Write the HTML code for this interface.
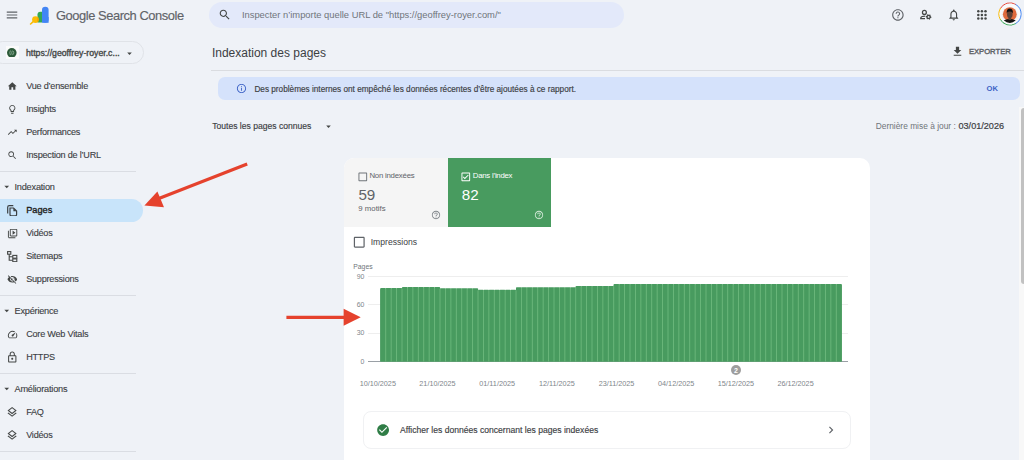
<!DOCTYPE html>
<html><head><meta charset="utf-8"><style>
html,body{margin:0;padding:0;}
body{width:1024px;height:460px;overflow:hidden;position:relative;background:#eff2f7;font-family:"Liberation Sans",sans-serif;}
.t{position:absolute;white-space:nowrap;line-height:1;}
.i{position:absolute;display:block;}
.b{position:absolute;}
</style></head><body>
<svg class="i" style="left:5.00px;top:7.60px;width:14px;height:14px" viewBox="0 0 24 24"><path fill="#5f6368" d="M3 18h18v-2H3v2zm0-5h18v-2H3v2zm0-7v2h18V6H3z"/></svg>
<svg class="i" style="left:28px;top:5px;width:24px;height:20px" viewBox="0 0 24 20">
<rect x="14" y="1.8" width="6.6" height="16" rx="3.3" fill="#4285f4"/>
<rect x="14" y="12" width="6.6" height="5.8" fill="#4285f4"/>
<path d="M9.5 9.6 Q9.5 6.7 12.3 6.7 L14 6.7 L14 17.6 L9.5 17.6 Z" fill="#34a853"/>
<circle cx="7.5" cy="14.6" r="3.4" fill="#fbbc04"/>
<path d="M9.5 12 A3.4 3.4 0 0 1 9.5 17.2 Z" fill="#ea8600" opacity=".7"/>
<path d="M5.2 16.6 L2.6 19" stroke="#fbbc04" stroke-width="1.6" stroke-linecap="round"/>
</svg>
<div class="t" style="left:55.90px;top:9.78px;font-size:12.9px;color:#5f6368;font-weight:normal;letter-spacing:-0.43px;-webkit-text-stroke:0.15px #5f6368">Google Search Console</div>
<div class="b" style="left:209px;top:2px;width:415px;height:25.5px;border-radius:13px;background:#e3e9fa"></div>
<svg class="i" style="left:217.85px;top:7.75px;width:13.5px;height:13.5px" viewBox="0 0 24 24"><path fill="#444746" d="M15.5 14h-.79l-.28-.27C15.41 12.59 16 11.11 16 9.5 16 5.91 13.09 3 9.5 3S3 5.91 3 9.5 5.91 16 9.5 16c1.61 0 3.09-.59 4.230-1.57l.27.28v.79l5 4.99L20.49 19l-4.99-5zm-6 0C7.01 14 5 11.99 5 9.5S7.01 5 9.5 5 14 7.01 14 9.5 11.99 14 9.5 14z"/></svg>
<div class="t" style="left:241.90px;top:11.07px;font-size:9.37px;color:#70757a;font-weight:normal;">Inspecter n’importe quelle URL de "https://geoffrey-royer.com/"</div>
<svg class="i" style="left:891.10px;top:7.60px;width:13.8px;height:13.8px" viewBox="0 0 24 24"><path fill="#5f6368" d="M11 18h2v-2h-2v2zm1-16C6.48 2 2 6.48 2 12s4.48 10 10 10 10-4.48 10-10S17.52 2 12 2zm0 18c-4.410 0-8-3.59-8-8s3.59-8 8-8 8 3.59 8 8-3.59 8-8 8zm0-14c-2.21 0-4 1.79-4 4h2c0-1.1.9-2 2-2s2 .9 2 2c0 2-3 1.75-3 5h2c0-2.25 3-2.5 3-5 0-2.21-1.79-4-4-4z"/></svg>
<svg class="i" style="left:919px;top:9px;width:13px;height:12px" viewBox="0 0 13 12">
<circle cx="5.4" cy="3.4" r="1.95" fill="none" stroke="#444746" stroke-width="1.25"/>
<path d="M6.2 7.05 Q1.9 7.1 1.8 9.0 V9.7 H6.0" fill="none" stroke="#444746" stroke-width="1.3"/>
<path d="M12.45,7.90 L12.35,8.64 L11.51,9.00 L11.16,9.46 L11.03,10.37 L10.34,10.65 L9.60,10.10 L9.03,10.03 L8.18,10.37 L7.58,9.92 L7.69,9.00 L7.47,8.47 L6.75,7.90 L6.85,7.16 L7.69,6.80 L8.04,6.34 L8.17,5.43 L8.86,5.15 L9.60,5.70 L10.17,5.77 L11.03,5.43 L11.62,5.88 L11.51,6.80 L11.73,7.33 Z" fill="#444746"/>
<circle cx="9.6" cy="7.9" r="0.9" fill="#eff2f7"/>
</svg>
<svg class="i" style="left:946.75px;top:8.25px;width:13.5px;height:13.5px" viewBox="0 0 24 24"><path fill="#444746" d="M12 22c1.1 0 2-.9 2-2h-4c0 1.1.89 2 2 2zm6-6v-5c0-3.07-1.64-5.64-4.5-6.32V4c0-.83-.67-1.5-1.5-1.5s-1.5.67-1.5 1.5v.68C7.63 5.36 6 7.92 6 11v5l-2 2v1h16v-1l-2-2zm-2 1H8v-6c0-2.48 1.51-4.5 4-4.5s4 2.02 4 4.5v6z"/></svg>
<svg class="i" style="left:976.6px;top:9.6px;width:10px;height:10px" viewBox="0 0 10 10"><circle cx="1.3" cy="1.3" r="1.25" fill="#444746"/><circle cx="4.9" cy="1.3" r="1.25" fill="#444746"/><circle cx="8.5" cy="1.3" r="1.25" fill="#444746"/><circle cx="1.3" cy="4.9" r="1.25" fill="#444746"/><circle cx="4.9" cy="4.9" r="1.25" fill="#444746"/><circle cx="8.5" cy="4.9" r="1.25" fill="#444746"/><circle cx="1.3" cy="8.5" r="1.25" fill="#444746"/><circle cx="4.9" cy="8.5" r="1.25" fill="#444746"/><circle cx="8.5" cy="8.5" r="1.25" fill="#444746"/></svg>
<svg class="i" style="left:997.5px;top:2.4px;width:24px;height:24px" viewBox="0 0 24 24">
<path d="M2.39 6.45 A11.1 11.1 0 0 1 17.88 2.59" fill="none" stroke="#ea4335" stroke-width="1.0"/><path d="M17.55 2.39 A11.1 11.1 0 0 1 17.21 21.80" fill="none" stroke="#4285f4" stroke-width="1.0"/><path d="M17.55 21.61 A11.1 11.1 0 0 1 2.20 17.21" fill="none" stroke="#34a853" stroke-width="1.0"/><path d="M2.39 17.55 A11.1 11.1 0 0 1 2.59 6.12" fill="none" stroke="#fbbc04" stroke-width="1.0"/>
<circle cx="12" cy="12" r="10.4" fill="#fafafa"/>
<clipPath id="av"><circle cx="11.8" cy="12.8" r="8.1"/></clipPath>
<g clip-path="url(#av)">
<rect x="0" y="0" width="24" height="24" fill="#f3f3f3"/>
<circle cx="11.8" cy="12.2" r="6.9" fill="#df6a3c"/>
<path d="M3 24 Q3.5 17.4 11.8 16.8 Q20 17.4 20.6 24 Z" fill="#161616"/>
<ellipse cx="11.8" cy="12.4" rx="2.8" ry="3.7" fill="#5e4236"/>
<path d="M8.7 11.5 Q8.3 6.6 11.8 6.6 Q15.3 6.6 14.9 11.5 Q14.2 9.2 11.8 9.4 Q9.4 9.2 8.7 11.5 Z" fill="#121212"/>
<path d="M10.4 16 H13.2 V18 H10.4Z" fill="#5e4236"/>
</g>
</svg>
<div class="b" style="left:-9px;top:41.3px;width:152.5px;height:22.8px;border:1px solid #e0e3e8;border-radius:12px;box-sizing:border-box"></div>
<div class="b" style="left:6px;top:46.3px;width:12.5px;height:12.7px;background:#fbfbfb"></div>
<svg class="i" style="left:7.4px;top:47.9px;width:9.6px;height:9.6px" viewBox="0 0 10 10"><circle cx="5" cy="5" r="5" fill="#2c5a39"/><path d="M3.6 2.6 Q2.2 5 3.6 7.4 M5.6 2.6 Q4.2 5 5.6 7.4 M6.6 3.2 Q7.6 5 6.6 6.8" fill="none" stroke="#a9c7b0" stroke-width="0.7"/></svg>
<div class="t" style="left:25.90px;top:49.41px;font-size:8.73px;color:#444746;font-weight:normal;-webkit-text-stroke:0.35px #444746">https://geoffrey-royer.c...</div>
<svg class="i" style="left:123.90px;top:47.70px;width:11px;height:11px" viewBox="0 0 24 24"><path fill="#444746" d="M7 10l5 5 5-5z"/></svg>
<svg class="i" style="left:6.90px;top:80.80px;width:10.6px;height:10.6px" viewBox="0 0 24 24"><path fill="#444746" d="M10 20v-6h4v6h5v-8h3L12 3 2 12h3v8z"/></svg>
<div class="t" style="left:26.20px;top:82.30px;font-size:9.1px;color:#3c4043;font-weight:normal;letter-spacing:-0.22px;-webkit-text-stroke:0.12px #3c4043">Vue d’ensemble</div>
<svg class="i" style="left:6.90px;top:103.80px;width:10.6px;height:10.6px" viewBox="0 0 24 24"><path fill="#444746" d="M9 21c0 .55.45 1 1 1h4c.55 0 1-.45 1-1v-1H9v1zm3-19C8.14 2 5 5.14 5 9c0 2.38 1.19 4.470 3 5.74V17c0 .55.45 1 1 1h6c.55 0 1-.45 1-1v-2.26c1.81-1.27 3-3.36 3-5.74 0-3.86-3.14-7-7-7zm2.85 11.1l-.85.6V16h-4v-2.3l-.85-.6C7.8 12.16 7 10.63 7 9c0-2.76 2.24-5 5-5s5 2.24 5 5c0 1.63-.8 3.16-2.15 4.1z"/></svg>
<div class="t" style="left:26.20px;top:105.30px;font-size:9.1px;color:#3c4043;font-weight:normal;letter-spacing:-0.22px;-webkit-text-stroke:0.12px #3c4043">Insights</div>
<svg class="i" style="left:6.90px;top:126.80px;width:10.6px;height:10.6px" viewBox="0 0 24 24"><path fill="#444746" d="M16 6l2.29 2.29-4.88 4.88-4-4L2 16.59 3.410 18l6-6 4 4 6.3-6.29L22 12V6z"/></svg>
<div class="t" style="left:26.20px;top:128.30px;font-size:9.1px;color:#3c4043;font-weight:normal;letter-spacing:-0.22px;-webkit-text-stroke:0.12px #3c4043">Performances</div>
<svg class="i" style="left:6.90px;top:149.80px;width:10.6px;height:10.6px" viewBox="0 0 24 24"><path fill="#444746" d="M15.5 14h-.79l-.28-.27C15.41 12.59 16 11.11 16 9.5 16 5.91 13.09 3 9.5 3S3 5.91 3 9.5 5.91 16 9.5 16c1.61 0 3.09-.59 4.230-1.57l.27.28v.79l5 4.99L20.49 19l-4.99-5zm-6 0C7.01 14 5 11.99 5 9.5S7.01 5 9.5 5 14 7.01 14 9.5 11.99 14 9.5 14z"/></svg>
<div class="t" style="left:26.20px;top:151.30px;font-size:9.1px;color:#3c4043;font-weight:normal;letter-spacing:-0.22px;-webkit-text-stroke:0.12px #3c4043">Inspection de l’URL</div>
<div class="b" style="left:0;top:170.8px;width:136px;height:1px;background:#dadde3"></div>
<svg class="i" style="left:0.75px;top:181.05px;width:11.5px;height:11.5px" viewBox="0 0 24 24"><path fill="#444746" d="M7 10l5 5 5-5z"/></svg>
<div class="t" style="left:14.50px;top:183.21px;font-size:9.2px;color:#3c4043;font-weight:normal;letter-spacing:-0.22px;-webkit-text-stroke:0.12px #3c4043">Indexation</div>
<div class="b" style="left:0;top:198.8px;width:143px;height:22.8px;border-radius:0 11.4px 11.4px 0;background:#c8e4fa"></div>
<svg class="i" style="left:7px;top:204.5px;width:10.5px;height:11.5px" viewBox="0 0 10.5 11.5">
<path d="M0.7 8.5 V2.2 Q0.7 0.7 2.2 0.7 H6.3" fill="none" stroke="#3c4043" stroke-width="1.2"/>
<path d="M3 3 H6.6 L9.6 6 V9.5 Q9.6 10.8 8.3 10.8 H4.3 Q3 10.8 3 9.5 Z" fill="none" stroke="#3c4043" stroke-width="1.2"/>
<path d="M6.4 3 V6.2 H9.6" fill="#3c4043"/>
</svg>
<div class="t" style="left:26.20px;top:206.21px;font-size:9.2px;color:#1f1f1f;font-weight:normal;-webkit-text-stroke:0.35px #1f1f1f">Pages</div>
<svg class="i" style="left:6.60px;top:227.50px;width:11.2px;height:11.2px" viewBox="0 0 24 24"><path fill="#444746" d="M4 6H2v14c0 1.1.9 2 2 2h14v-2H4V6zm16-4H8c-1.1 0-2 .9-2 2v12c0 1.1.9 2 2 2h12c1.1 0 2-.9 2-2V4c0-1.1-.9-2-2-2zm0 14H8V4h12v12zM12 5.5v9l6-4.5z"/></svg>
<div class="t" style="left:26.20px;top:229.30px;font-size:9.1px;color:#3c4043;font-weight:normal;letter-spacing:-0.22px;-webkit-text-stroke:0.12px #3c4043">Vidéos</div>
<svg class="i" style="left:7px;top:250.5px;width:10.5px;height:11px" viewBox="0 0 10.5 11">
<rect x="0.6" y="0.6" width="3.2" height="2.6" fill="none" stroke="#444746" stroke-width="1.1"/>
<path d="M2.2 3.2 V9.3 H5.8 M2.2 5.8 H5.8" fill="none" stroke="#444746" stroke-width="1.1"/>
<rect x="5.8" y="4.4" width="4" height="2.8" fill="none" stroke="#444746" stroke-width="1.1"/>
<rect x="5.8" y="7.9" width="4" height="2.8" fill="none" stroke="#444746" stroke-width="1.1"/>
</svg>
<div class="t" style="left:26.20px;top:252.30px;font-size:9.1px;color:#3c4043;font-weight:normal;letter-spacing:-0.22px;-webkit-text-stroke:0.12px #3c4043">Sitemaps</div>
<svg class="i" style="left:6.90px;top:273.80px;width:10.6px;height:10.6px" viewBox="0 0 24 24"><path fill="#444746" d="M12 7c2.76 0 5 2.24 5 5 0 .65-.13 1.26-.36 1.83l2.92 2.92c1.51-1.26 2.7-2.89 3.43-4.75-1.73-4.39-6-7.5-11-7.5-1.4 0-2.74.25-3.98.7l2.16 2.16C10.74 7.13 11.35 7 12 7zM2 4.27l2.28 2.28.46.46C3.08 8.3 1.78 10.02 1 12c1.73 4.39 6 7.5 11 7.5 1.55 0 3.03-.3 4.38-.84l.42.42L19.73 22 21 20.73 3.27 3 2 4.27zM7.53 9.8l1.55 1.55c-.05.21-.08.43-.08.65 0 1.66 1.34 3 3 3 .22 0 .44-.03.65-.08l1.55 1.55c-.67.33-1.41.53-2.2.53-2.76 0-5-2.24-5-5 0-.79.2-1.53.53-2.2zm4.31-.78l3.15 3.15.02-.16c0-1.66-1.34-3-3-3l-.17.01z"/></svg>
<div class="t" style="left:26.20px;top:275.30px;font-size:9.1px;color:#3c4043;font-weight:normal;letter-spacing:-0.22px;-webkit-text-stroke:0.12px #3c4043">Suppressions</div>
<div class="b" style="left:0;top:294.9px;width:136px;height:1px;background:#dadde3"></div>
<svg class="i" style="left:0.75px;top:304.75px;width:11.5px;height:11.5px" viewBox="0 0 24 24"><path fill="#444746" d="M7 10l5 5 5-5z"/></svg>
<div class="t" style="left:14.50px;top:306.91px;font-size:9.2px;color:#3c4043;font-weight:normal;letter-spacing:-0.22px;-webkit-text-stroke:0.12px #3c4043">Expérience</div>
<svg class="i" style="left:6.60px;top:328.60px;width:11.2px;height:11.2px" viewBox="0 0 24 24"><path fill="#444746" d="M20.38 8.57l-1.23 1.85a8 8 0 0 1-.22 7.58H5.07A8 8 0 0 1 15.58 6.85l1.85-1.23A10 10 0 0 0 3.35 19a2 2 0 0 0 1.72 1h13.85a2 2 0 0 0 1.74-1 10 10 0 0 0-.27-10.44zm-9.79 6.84a2 2 0 0 0 2.83 0l5.66-8.49-8.49 5.66a2 2 0 0 0 0 2.83z"/></svg>
<div class="t" style="left:26.20px;top:329.90px;font-size:9.1px;color:#3c4043;font-weight:normal;letter-spacing:-0.22px;-webkit-text-stroke:0.12px #3c4043">Core Web Vitals</div>
<svg class="i" style="left:5.95px;top:351.35px;width:12.5px;height:12.5px" viewBox="0 0 24 24"><path fill="#444746" d="M18 8h-1V6c0-2.76-2.24-5-5-5S7 3.24 7 6v2H6c-1.1 0-2 .9-2 2v10c0 1.1.9 2 2 2h12c1.1 0 2-.9 2-2V10c0-1.1-.9-2-2-2zM9 6c0-1.66 1.34-3 3-3s3 1.34 3 3v2H9V6zm9 14H6V10h12v10zm-6-3c1.1 0 2-.9 2-2s-.9-2-2-2-2 .9-2 2 .9 2 2 2z"/></svg>
<div class="t" style="left:26.20px;top:352.90px;font-size:9.1px;color:#3c4043;font-weight:normal;letter-spacing:-0.22px;-webkit-text-stroke:0.12px #3c4043">HTTPS</div>
<div class="b" style="left:0;top:372.9px;width:136px;height:1px;background:#dadde3"></div>
<svg class="i" style="left:0.75px;top:382.55px;width:11.5px;height:11.5px" viewBox="0 0 24 24"><path fill="#444746" d="M7 10l5 5 5-5z"/></svg>
<div class="t" style="left:14.50px;top:384.71px;font-size:9.2px;color:#3c4043;font-weight:normal;letter-spacing:-0.22px;-webkit-text-stroke:0.12px #3c4043">Améliorations</div>
<svg class="i" style="left:6.10px;top:405.50px;width:12.2px;height:12.2px" viewBox="0 0 24 24"><path fill="#444746" d="M11.99 18.54l-7.37-5.73L3 14.07l9 7 9-7-1.63-1.27-7.38 5.74zM12 16l7.36-5.73L21 9l-9-7-9 7 1.63 1.27L12 16zm0-11.47L17.74 9 12 13.47 6.26 9 12 4.53z"/></svg>
<div class="t" style="left:26.20px;top:407.80px;font-size:9.1px;color:#3c4043;font-weight:normal;letter-spacing:-0.22px;-webkit-text-stroke:0.12px #3c4043">FAQ</div>
<svg class="i" style="left:6.10px;top:428.60px;width:12.2px;height:12.2px" viewBox="0 0 24 24"><path fill="#444746" d="M11.99 18.54l-7.37-5.73L3 14.07l9 7 9-7-1.63-1.27-7.38 5.74zM12 16l7.36-5.73L21 9l-9-7-9 7 1.63 1.27L12 16zm0-11.47L17.74 9 12 13.47 6.26 9 12 4.53z"/></svg>
<div class="t" style="left:26.20px;top:430.90px;font-size:9.1px;color:#3c4043;font-weight:normal;letter-spacing:-0.22px;-webkit-text-stroke:0.12px #3c4043">Vidéos</div>
<div class="b" style="left:0;top:450.7px;width:136px;height:1px;background:#dadde3"></div>
<div class="t" style="left:211.90px;top:46.84px;font-size:12px;color:#3c4043;font-weight:normal;">Indexation des pages</div>
<svg class="i" style="left:950.50px;top:45.30px;width:13px;height:13px" viewBox="0 0 24 24"><path fill="#444746" d="M19 9h-4V3H9v6H5l7 7 7-7zM5 18v2h14v-2H5z"/></svg>
<div class="t" style="left:968.90px;top:47.82px;font-size:7.65px;color:#5f6368;font-weight:normal;-webkit-text-stroke:0.4px #5f6368">EXPORTER</div>
<div class="b" style="left:210.5px;top:70px;width:814px;height:1px;background:#dadce0"></div>
<div class="b" style="left:218.3px;top:77.2px;width:801.5px;height:22.7px;border-radius:7px;background:#d5e2fb"></div>
<svg class="i" style="left:235.90px;top:83.20px;width:11px;height:11px" viewBox="0 0 24 24"><path fill="#3f64c6" d="M11 7h2v2h-2zm0 4h2v6h-2zm1-9C6.48 2 2 6.48 2 12s4.48 10 10 10 10-4.48 10-10S17.52 2 12 2zm0 18c-4.41 0-8-3.59-8-8s3.59-8 8-8 8 3.59 8 8-3.59 8-8 8z"/></svg>
<div class="t" style="left:254.40px;top:85.63px;font-size:8.23px;color:#3c4043;font-weight:normal;-webkit-text-stroke:0.15px #3c4043">Des problèmes internes ont empêché les données récentes d’être ajoutées à ce rapport.</div>
<div class="t" style="left:986.50px;top:85.07px;font-size:7.6px;color:#3d63c6;font-weight:bold;">OK</div>
<div class="t" style="left:212.20px;top:121.64px;font-size:8.58px;color:#3c4043;font-weight:normal;-webkit-text-stroke:0.15px #3c4043">Toutes les pages connues</div>
<svg class="i" style="left:323.00px;top:120.50px;width:11px;height:11px" viewBox="0 0 24 24"><path fill="#444746" d="M7 10l5 5 5-5z"/></svg>
<div class="t" style="left:875.70px;top:121.81px;font-size:8.38px;color:#70757a;font-weight:normal;">Dernière mise à jour : </div>
<div class="t" style="left:958.50px;top:121.90px;font-size:9.1px;color:#3c4043;font-weight:normal;-webkit-text-stroke:0.2px #3c4043">03/01/2026</div>
<div class="b" style="left:1018.6px;top:107px;width:5.4px;height:353px;background:#f8f8f8"></div>
<div class="b" style="left:1021px;top:108.4px;width:6px;height:175.6px;border-radius:3px;background:#c1c1c1"></div>
<div class="b" style="left:344px;top:157.6px;width:526px;height:320px;border-radius:10px;background:#fff;overflow:hidden"><div class="b" style="left:0;top:0;width:103.7px;height:69.7px;background:#f5f5f5"></div><div class="b" style="left:103.7px;top:0;width:103.7px;height:69.7px;background:#489b5f"></div></div>
<svg class="i" style="left:356.60px;top:170.60px;width:11.6px;height:11.6px" viewBox="0 0 24 24"><path fill="#70757a" d="M19 5v14H5V5h14m0-2H5c-1.1 0-2 .9-2 2v14c0 1.1.9 2 2 2h14c1.1 0 2-.9 2-2V5c0-1.1-.9-2-2-2z"/></svg>
<div class="t" style="left:369.40px;top:172.30px;font-size:7.8px;color:#5f6368;font-weight:normal;letter-spacing:-0.22px">Non indexées</div>
<div class="t" style="left:358.40px;top:187.03px;font-size:15.2px;color:#5f6368;font-weight:normal;">59</div>
<div class="t" style="left:358.30px;top:205.00px;font-size:7.8px;color:#5f6368;font-weight:normal;">9 motifs</div>
<svg class="i" style="left:430.50px;top:210.20px;width:10px;height:10px" viewBox="0 0 24 24"><path fill="#80868b" d="M11 18h2v-2h-2v2zm1-16C6.48 2 2 6.48 2 12s4.48 10 10 10 10-4.48 10-10S17.52 2 12 2zm0 18c-4.410 0-8-3.59-8-8s3.59-8 8-8 8 3.59 8 8-3.59 8-8 8zm0-14c-2.21 0-4 1.79-4 4h2c0-1.1.9-2 2-2s2 .9 2 2c0 2-3 1.75-3 5h2c0-2.25 3-2.5 3-5 0-2.21-1.79-4-4-4z"/></svg>
<svg class="i" style="left:459.70px;top:170.60px;width:11.6px;height:11.6px" viewBox="0 0 24 24"><path fill="#ffffff" d="M19 3H5c-1.11 0-2 .9-2 2v14c0 1.1.89 2 2 2h14c1.11 0 2-.9 2-2V5c0-1.1-.89-2-2-2zm0 16H5V5h14v14zM17.99 9l-1.41-1.42-6.59 6.59-2.58-2.57-1.42 1.41 4 3.99z"/></svg>
<div class="t" style="left:472.80px;top:172.30px;font-size:7.8px;color:#ffffff;font-weight:normal;letter-spacing:-0.25px">Dans l’index</div>
<div class="t" style="left:461.80px;top:187.03px;font-size:15.2px;color:#ffffff;font-weight:normal;">82</div>
<svg class="i" style="left:534.40px;top:210.20px;width:10px;height:10px" viewBox="0 0 24 24"><path fill="#d5ead9" d="M11 18h2v-2h-2v2zm1-16C6.48 2 2 6.48 2 12s4.48 10 10 10 10-4.48 10-10S17.52 2 12 2zm0 18c-4.410 0-8-3.59-8-8s3.59-8 8-8 8 3.59 8 8-3.59 8-8 8zm0-14c-2.21 0-4 1.79-4 4h2c0-1.1.9-2 2-2s2 .9 2 2c0 2-3 1.75-3 5h2c0-2.25 3-2.5 3-5 0-2.21-1.79-4-4-4z"/></svg>
<svg class="i" style="left:351.55px;top:234.85px;width:14.5px;height:14.5px" viewBox="0 0 24 24"><path fill="#5f6368" d="M19 5v14H5V5h14m0-2H5c-1.1 0-2 .9-2 2v14c0 1.1.9 2 2 2h14c1.1 0 2-.9 2-2V5c0-1.1-.9-2-2-2z"/></svg>
<div class="t" style="left:370.70px;top:237.62px;font-size:8.6px;color:#3c4043;font-weight:normal;">Impressions</div>
<div class="t" style="left:353.30px;top:264.14px;font-size:6.8px;color:#70757a;font-weight:normal;">Pages</div>
<div class="t" style="right:659.70px;top:273.56px;font-size:6.9px;color:#80868b;font-weight:normal;">90</div>
<div class="b" style="left:367.6px;top:275.8px;width:480.6px;height:1px;background:#eeeeee"></div>
<div class="t" style="right:659.70px;top:301.96px;font-size:6.9px;color:#80868b;font-weight:normal;">60</div>
<div class="b" style="left:367.6px;top:304.2px;width:480.6px;height:1px;background:#eeeeee"></div>
<div class="t" style="right:659.70px;top:330.26px;font-size:6.9px;color:#80868b;font-weight:normal;">30</div>
<div class="b" style="left:367.6px;top:332.5px;width:480.6px;height:1px;background:#eeeeee"></div>
<div class="t" style="right:659.70px;top:358.66px;font-size:6.9px;color:#80868b;font-weight:normal;">0</div>
<div class="b" style="left:367.6px;top:360.9px;width:480.6px;height:1px;background:#9aa0a6"></div>
<svg class="i" style="left:0;top:0;width:1024px;height:460px" viewBox="0 0 1024 460"><rect x="380.30" y="288.10" width="5.478" height="73.40" rx="0.6" fill="#489b5f"/><rect x="380.30" y="289.10" width="5.478" height="72.40" fill="#489b5f"/><rect x="385.73" y="288.10" width="5.478" height="73.40" rx="0.6" fill="#489b5f"/><rect x="385.73" y="289.10" width="5.478" height="72.40" fill="#489b5f"/><rect x="391.16" y="288.10" width="5.478" height="73.40" rx="0.6" fill="#489b5f"/><rect x="391.16" y="289.10" width="5.478" height="72.40" fill="#489b5f"/><rect x="396.58" y="288.10" width="5.478" height="73.40" rx="0.6" fill="#489b5f"/><rect x="396.58" y="289.10" width="5.478" height="72.40" fill="#489b5f"/><rect x="402.01" y="287.10" width="5.478" height="74.40" rx="0.6" fill="#489b5f"/><rect x="402.01" y="288.10" width="5.478" height="73.40" fill="#489b5f"/><rect x="407.44" y="287.10" width="5.478" height="74.40" rx="0.6" fill="#489b5f"/><rect x="407.44" y="288.10" width="5.478" height="73.40" fill="#489b5f"/><rect x="412.87" y="287.10" width="5.478" height="74.40" rx="0.6" fill="#489b5f"/><rect x="412.87" y="288.10" width="5.478" height="73.40" fill="#489b5f"/><rect x="418.30" y="287.10" width="5.478" height="74.40" rx="0.6" fill="#489b5f"/><rect x="418.30" y="288.10" width="5.478" height="73.40" fill="#489b5f"/><rect x="423.73" y="287.10" width="5.478" height="74.40" rx="0.6" fill="#489b5f"/><rect x="423.73" y="288.10" width="5.478" height="73.40" fill="#489b5f"/><rect x="429.15" y="287.10" width="5.478" height="74.40" rx="0.6" fill="#489b5f"/><rect x="429.15" y="288.10" width="5.478" height="73.40" fill="#489b5f"/><rect x="434.58" y="287.10" width="5.478" height="74.40" rx="0.6" fill="#489b5f"/><rect x="434.58" y="288.10" width="5.478" height="73.40" fill="#489b5f"/><rect x="440.01" y="288.20" width="5.478" height="73.30" rx="0.6" fill="#489b5f"/><rect x="440.01" y="289.20" width="5.478" height="72.30" fill="#489b5f"/><rect x="445.44" y="288.20" width="5.478" height="73.30" rx="0.6" fill="#489b5f"/><rect x="445.44" y="289.20" width="5.478" height="72.30" fill="#489b5f"/><rect x="450.87" y="288.20" width="5.478" height="73.30" rx="0.6" fill="#489b5f"/><rect x="450.87" y="289.20" width="5.478" height="72.30" fill="#489b5f"/><rect x="456.30" y="288.20" width="5.478" height="73.30" rx="0.6" fill="#489b5f"/><rect x="456.30" y="289.20" width="5.478" height="72.30" fill="#489b5f"/><rect x="461.72" y="288.20" width="5.478" height="73.30" rx="0.6" fill="#489b5f"/><rect x="461.72" y="289.20" width="5.478" height="72.30" fill="#489b5f"/><rect x="467.15" y="288.20" width="5.478" height="73.30" rx="0.6" fill="#489b5f"/><rect x="467.15" y="289.20" width="5.478" height="72.30" fill="#489b5f"/><rect x="472.58" y="288.20" width="5.478" height="73.30" rx="0.6" fill="#489b5f"/><rect x="472.58" y="289.20" width="5.478" height="72.30" fill="#489b5f"/><rect x="478.01" y="289.80" width="5.478" height="71.70" rx="0.6" fill="#489b5f"/><rect x="478.01" y="290.80" width="5.478" height="70.70" fill="#489b5f"/><rect x="483.44" y="289.80" width="5.478" height="71.70" rx="0.6" fill="#489b5f"/><rect x="483.44" y="290.80" width="5.478" height="70.70" fill="#489b5f"/><rect x="488.86" y="289.80" width="5.478" height="71.70" rx="0.6" fill="#489b5f"/><rect x="488.86" y="290.80" width="5.478" height="70.70" fill="#489b5f"/><rect x="494.29" y="289.80" width="5.478" height="71.70" rx="0.6" fill="#489b5f"/><rect x="494.29" y="290.80" width="5.478" height="70.70" fill="#489b5f"/><rect x="499.72" y="289.80" width="5.478" height="71.70" rx="0.6" fill="#489b5f"/><rect x="499.72" y="290.80" width="5.478" height="70.70" fill="#489b5f"/><rect x="505.15" y="289.80" width="5.478" height="71.70" rx="0.6" fill="#489b5f"/><rect x="505.15" y="290.80" width="5.478" height="70.70" fill="#489b5f"/><rect x="510.58" y="289.80" width="5.478" height="71.70" rx="0.6" fill="#489b5f"/><rect x="510.58" y="290.80" width="5.478" height="70.70" fill="#489b5f"/><rect x="516.01" y="287.20" width="5.478" height="74.30" rx="0.6" fill="#489b5f"/><rect x="516.01" y="288.20" width="5.478" height="73.30" fill="#489b5f"/><rect x="521.43" y="287.20" width="5.478" height="74.30" rx="0.6" fill="#489b5f"/><rect x="521.43" y="288.20" width="5.478" height="73.30" fill="#489b5f"/><rect x="526.86" y="287.20" width="5.478" height="74.30" rx="0.6" fill="#489b5f"/><rect x="526.86" y="288.20" width="5.478" height="73.30" fill="#489b5f"/><rect x="532.29" y="287.20" width="5.478" height="74.30" rx="0.6" fill="#489b5f"/><rect x="532.29" y="288.20" width="5.478" height="73.30" fill="#489b5f"/><rect x="537.72" y="287.20" width="5.478" height="74.30" rx="0.6" fill="#489b5f"/><rect x="537.72" y="288.20" width="5.478" height="73.30" fill="#489b5f"/><rect x="543.15" y="287.20" width="5.478" height="74.30" rx="0.6" fill="#489b5f"/><rect x="543.15" y="288.20" width="5.478" height="73.30" fill="#489b5f"/><rect x="548.58" y="287.20" width="5.478" height="74.30" rx="0.6" fill="#489b5f"/><rect x="548.58" y="288.20" width="5.478" height="73.30" fill="#489b5f"/><rect x="554.00" y="287.20" width="5.478" height="74.30" rx="0.6" fill="#489b5f"/><rect x="554.00" y="288.20" width="5.478" height="73.30" fill="#489b5f"/><rect x="559.43" y="287.20" width="5.478" height="74.30" rx="0.6" fill="#489b5f"/><rect x="559.43" y="288.20" width="5.478" height="73.30" fill="#489b5f"/><rect x="564.86" y="287.20" width="5.478" height="74.30" rx="0.6" fill="#489b5f"/><rect x="564.86" y="288.20" width="5.478" height="73.30" fill="#489b5f"/><rect x="570.29" y="287.20" width="5.478" height="74.30" rx="0.6" fill="#489b5f"/><rect x="570.29" y="288.20" width="5.478" height="73.30" fill="#489b5f"/><rect x="575.72" y="286.00" width="5.478" height="75.50" rx="0.6" fill="#489b5f"/><rect x="575.72" y="287.00" width="5.478" height="74.50" fill="#489b5f"/><rect x="581.14" y="286.00" width="5.478" height="75.50" rx="0.6" fill="#489b5f"/><rect x="581.14" y="287.00" width="5.478" height="74.50" fill="#489b5f"/><rect x="586.57" y="286.00" width="5.478" height="75.50" rx="0.6" fill="#489b5f"/><rect x="586.57" y="287.00" width="5.478" height="74.50" fill="#489b5f"/><rect x="592.00" y="286.00" width="5.478" height="75.50" rx="0.6" fill="#489b5f"/><rect x="592.00" y="287.00" width="5.478" height="74.50" fill="#489b5f"/><rect x="597.43" y="286.00" width="5.478" height="75.50" rx="0.6" fill="#489b5f"/><rect x="597.43" y="287.00" width="5.478" height="74.50" fill="#489b5f"/><rect x="602.86" y="286.00" width="5.478" height="75.50" rx="0.6" fill="#489b5f"/><rect x="602.86" y="287.00" width="5.478" height="74.50" fill="#489b5f"/><rect x="608.29" y="286.00" width="5.478" height="75.50" rx="0.6" fill="#489b5f"/><rect x="608.29" y="287.00" width="5.478" height="74.50" fill="#489b5f"/><rect x="613.71" y="284.00" width="5.478" height="77.50" rx="0.6" fill="#489b5f"/><rect x="613.71" y="285.00" width="5.478" height="76.50" fill="#489b5f"/><rect x="619.14" y="284.00" width="5.478" height="77.50" rx="0.6" fill="#489b5f"/><rect x="619.14" y="285.00" width="5.478" height="76.50" fill="#489b5f"/><rect x="624.57" y="284.00" width="5.478" height="77.50" rx="0.6" fill="#489b5f"/><rect x="624.57" y="285.00" width="5.478" height="76.50" fill="#489b5f"/><rect x="630.00" y="284.00" width="5.478" height="77.50" rx="0.6" fill="#489b5f"/><rect x="630.00" y="285.00" width="5.478" height="76.50" fill="#489b5f"/><rect x="635.43" y="284.00" width="5.478" height="77.50" rx="0.6" fill="#489b5f"/><rect x="635.43" y="285.00" width="5.478" height="76.50" fill="#489b5f"/><rect x="640.86" y="284.00" width="5.478" height="77.50" rx="0.6" fill="#489b5f"/><rect x="640.86" y="285.00" width="5.478" height="76.50" fill="#489b5f"/><rect x="646.28" y="284.00" width="5.478" height="77.50" rx="0.6" fill="#489b5f"/><rect x="646.28" y="285.00" width="5.478" height="76.50" fill="#489b5f"/><rect x="651.71" y="284.00" width="5.478" height="77.50" rx="0.6" fill="#489b5f"/><rect x="651.71" y="285.00" width="5.478" height="76.50" fill="#489b5f"/><rect x="657.14" y="284.00" width="5.478" height="77.50" rx="0.6" fill="#489b5f"/><rect x="657.14" y="285.00" width="5.478" height="76.50" fill="#489b5f"/><rect x="662.57" y="284.00" width="5.478" height="77.50" rx="0.6" fill="#489b5f"/><rect x="662.57" y="285.00" width="5.478" height="76.50" fill="#489b5f"/><rect x="668.00" y="284.00" width="5.478" height="77.50" rx="0.6" fill="#489b5f"/><rect x="668.00" y="285.00" width="5.478" height="76.50" fill="#489b5f"/><rect x="673.42" y="284.00" width="5.478" height="77.50" rx="0.6" fill="#489b5f"/><rect x="673.42" y="285.00" width="5.478" height="76.50" fill="#489b5f"/><rect x="678.85" y="284.00" width="5.478" height="77.50" rx="0.6" fill="#489b5f"/><rect x="678.85" y="285.00" width="5.478" height="76.50" fill="#489b5f"/><rect x="684.28" y="284.00" width="5.478" height="77.50" rx="0.6" fill="#489b5f"/><rect x="684.28" y="285.00" width="5.478" height="76.50" fill="#489b5f"/><rect x="689.71" y="284.00" width="5.478" height="77.50" rx="0.6" fill="#489b5f"/><rect x="689.71" y="285.00" width="5.478" height="76.50" fill="#489b5f"/><rect x="695.14" y="284.00" width="5.478" height="77.50" rx="0.6" fill="#489b5f"/><rect x="695.14" y="285.00" width="5.478" height="76.50" fill="#489b5f"/><rect x="700.57" y="284.00" width="5.478" height="77.50" rx="0.6" fill="#489b5f"/><rect x="700.57" y="285.00" width="5.478" height="76.50" fill="#489b5f"/><rect x="705.99" y="284.00" width="5.478" height="77.50" rx="0.6" fill="#489b5f"/><rect x="705.99" y="285.00" width="5.478" height="76.50" fill="#489b5f"/><rect x="711.42" y="284.00" width="5.478" height="77.50" rx="0.6" fill="#489b5f"/><rect x="711.42" y="285.00" width="5.478" height="76.50" fill="#489b5f"/><rect x="716.85" y="284.00" width="5.478" height="77.50" rx="0.6" fill="#489b5f"/><rect x="716.85" y="285.00" width="5.478" height="76.50" fill="#489b5f"/><rect x="722.28" y="284.00" width="5.478" height="77.50" rx="0.6" fill="#489b5f"/><rect x="722.28" y="285.00" width="5.478" height="76.50" fill="#489b5f"/><rect x="727.71" y="284.00" width="5.478" height="77.50" rx="0.6" fill="#489b5f"/><rect x="727.71" y="285.00" width="5.478" height="76.50" fill="#489b5f"/><rect x="733.14" y="284.00" width="5.478" height="77.50" rx="0.6" fill="#489b5f"/><rect x="733.14" y="285.00" width="5.478" height="76.50" fill="#489b5f"/><rect x="738.56" y="284.00" width="5.478" height="77.50" rx="0.6" fill="#489b5f"/><rect x="738.56" y="285.00" width="5.478" height="76.50" fill="#489b5f"/><rect x="743.99" y="284.00" width="5.478" height="77.50" rx="0.6" fill="#489b5f"/><rect x="743.99" y="285.00" width="5.478" height="76.50" fill="#489b5f"/><rect x="749.42" y="284.00" width="5.478" height="77.50" rx="0.6" fill="#489b5f"/><rect x="749.42" y="285.00" width="5.478" height="76.50" fill="#489b5f"/><rect x="754.85" y="284.00" width="5.478" height="77.50" rx="0.6" fill="#489b5f"/><rect x="754.85" y="285.00" width="5.478" height="76.50" fill="#489b5f"/><rect x="760.28" y="284.00" width="5.478" height="77.50" rx="0.6" fill="#489b5f"/><rect x="760.28" y="285.00" width="5.478" height="76.50" fill="#489b5f"/><rect x="765.70" y="284.00" width="5.478" height="77.50" rx="0.6" fill="#489b5f"/><rect x="765.70" y="285.00" width="5.478" height="76.50" fill="#489b5f"/><rect x="771.13" y="284.00" width="5.478" height="77.50" rx="0.6" fill="#489b5f"/><rect x="771.13" y="285.00" width="5.478" height="76.50" fill="#489b5f"/><rect x="776.56" y="284.00" width="5.478" height="77.50" rx="0.6" fill="#489b5f"/><rect x="776.56" y="285.00" width="5.478" height="76.50" fill="#489b5f"/><rect x="781.99" y="284.00" width="5.478" height="77.50" rx="0.6" fill="#489b5f"/><rect x="781.99" y="285.00" width="5.478" height="76.50" fill="#489b5f"/><rect x="787.42" y="284.00" width="5.478" height="77.50" rx="0.6" fill="#489b5f"/><rect x="787.42" y="285.00" width="5.478" height="76.50" fill="#489b5f"/><rect x="792.85" y="284.00" width="5.478" height="77.50" rx="0.6" fill="#489b5f"/><rect x="792.85" y="285.00" width="5.478" height="76.50" fill="#489b5f"/><rect x="798.27" y="284.00" width="5.478" height="77.50" rx="0.6" fill="#489b5f"/><rect x="798.27" y="285.00" width="5.478" height="76.50" fill="#489b5f"/><rect x="803.70" y="284.00" width="5.478" height="77.50" rx="0.6" fill="#489b5f"/><rect x="803.70" y="285.00" width="5.478" height="76.50" fill="#489b5f"/><rect x="809.13" y="284.00" width="5.478" height="77.50" rx="0.6" fill="#489b5f"/><rect x="809.13" y="285.00" width="5.478" height="76.50" fill="#489b5f"/><rect x="814.56" y="284.00" width="5.478" height="77.50" rx="0.6" fill="#489b5f"/><rect x="814.56" y="285.00" width="5.478" height="76.50" fill="#489b5f"/><rect x="819.99" y="284.00" width="5.478" height="77.50" rx="0.6" fill="#489b5f"/><rect x="819.99" y="285.00" width="5.478" height="76.50" fill="#489b5f"/><rect x="825.42" y="284.00" width="5.478" height="77.50" rx="0.6" fill="#489b5f"/><rect x="825.42" y="285.00" width="5.478" height="76.50" fill="#489b5f"/><rect x="830.84" y="284.00" width="5.478" height="77.50" rx="0.6" fill="#489b5f"/><rect x="830.84" y="285.00" width="5.478" height="76.50" fill="#489b5f"/><rect x="836.27" y="284.00" width="5.478" height="77.50" rx="0.6" fill="#489b5f"/><rect x="836.27" y="285.00" width="5.478" height="76.50" fill="#489b5f"/><rect x="385.28" y="288.70" width="0.9" height="72.80" fill="#6cb87c"/><rect x="390.71" y="288.70" width="0.9" height="72.80" fill="#6cb87c"/><rect x="396.13" y="288.70" width="0.9" height="72.80" fill="#6cb87c"/><rect x="401.56" y="288.70" width="0.9" height="72.80" fill="#6cb87c"/><rect x="406.99" y="287.70" width="0.9" height="73.80" fill="#6cb87c"/><rect x="412.42" y="287.70" width="0.9" height="73.80" fill="#6cb87c"/><rect x="417.85" y="287.70" width="0.9" height="73.80" fill="#6cb87c"/><rect x="423.28" y="287.70" width="0.9" height="73.80" fill="#6cb87c"/><rect x="428.70" y="287.70" width="0.9" height="73.80" fill="#6cb87c"/><rect x="434.13" y="287.70" width="0.9" height="73.80" fill="#6cb87c"/><rect x="439.56" y="288.80" width="0.9" height="72.70" fill="#6cb87c"/><rect x="444.99" y="288.80" width="0.9" height="72.70" fill="#6cb87c"/><rect x="450.42" y="288.80" width="0.9" height="72.70" fill="#6cb87c"/><rect x="455.85" y="288.80" width="0.9" height="72.70" fill="#6cb87c"/><rect x="461.27" y="288.80" width="0.9" height="72.70" fill="#6cb87c"/><rect x="466.70" y="288.80" width="0.9" height="72.70" fill="#6cb87c"/><rect x="472.13" y="288.80" width="0.9" height="72.70" fill="#6cb87c"/><rect x="477.56" y="290.40" width="0.9" height="71.10" fill="#6cb87c"/><rect x="482.99" y="290.40" width="0.9" height="71.10" fill="#6cb87c"/><rect x="488.41" y="290.40" width="0.9" height="71.10" fill="#6cb87c"/><rect x="493.84" y="290.40" width="0.9" height="71.10" fill="#6cb87c"/><rect x="499.27" y="290.40" width="0.9" height="71.10" fill="#6cb87c"/><rect x="504.70" y="290.40" width="0.9" height="71.10" fill="#6cb87c"/><rect x="510.13" y="290.40" width="0.9" height="71.10" fill="#6cb87c"/><rect x="515.56" y="290.40" width="0.9" height="71.10" fill="#6cb87c"/><rect x="520.98" y="287.80" width="0.9" height="73.70" fill="#6cb87c"/><rect x="526.41" y="287.80" width="0.9" height="73.70" fill="#6cb87c"/><rect x="531.84" y="287.80" width="0.9" height="73.70" fill="#6cb87c"/><rect x="537.27" y="287.80" width="0.9" height="73.70" fill="#6cb87c"/><rect x="542.70" y="287.80" width="0.9" height="73.70" fill="#6cb87c"/><rect x="548.13" y="287.80" width="0.9" height="73.70" fill="#6cb87c"/><rect x="553.55" y="287.80" width="0.9" height="73.70" fill="#6cb87c"/><rect x="558.98" y="287.80" width="0.9" height="73.70" fill="#6cb87c"/><rect x="564.41" y="287.80" width="0.9" height="73.70" fill="#6cb87c"/><rect x="569.84" y="287.80" width="0.9" height="73.70" fill="#6cb87c"/><rect x="575.27" y="287.80" width="0.9" height="73.70" fill="#6cb87c"/><rect x="580.69" y="286.60" width="0.9" height="74.90" fill="#6cb87c"/><rect x="586.12" y="286.60" width="0.9" height="74.90" fill="#6cb87c"/><rect x="591.55" y="286.60" width="0.9" height="74.90" fill="#6cb87c"/><rect x="596.98" y="286.60" width="0.9" height="74.90" fill="#6cb87c"/><rect x="602.41" y="286.60" width="0.9" height="74.90" fill="#6cb87c"/><rect x="607.84" y="286.60" width="0.9" height="74.90" fill="#6cb87c"/><rect x="613.26" y="286.60" width="0.9" height="74.90" fill="#6cb87c"/><rect x="618.69" y="284.60" width="0.9" height="76.90" fill="#6cb87c"/><rect x="624.12" y="284.60" width="0.9" height="76.90" fill="#6cb87c"/><rect x="629.55" y="284.60" width="0.9" height="76.90" fill="#6cb87c"/><rect x="634.98" y="284.60" width="0.9" height="76.90" fill="#6cb87c"/><rect x="640.41" y="284.60" width="0.9" height="76.90" fill="#6cb87c"/><rect x="645.83" y="284.60" width="0.9" height="76.90" fill="#6cb87c"/><rect x="651.26" y="284.60" width="0.9" height="76.90" fill="#6cb87c"/><rect x="656.69" y="284.60" width="0.9" height="76.90" fill="#6cb87c"/><rect x="662.12" y="284.60" width="0.9" height="76.90" fill="#6cb87c"/><rect x="667.55" y="284.60" width="0.9" height="76.90" fill="#6cb87c"/><rect x="672.97" y="284.60" width="0.9" height="76.90" fill="#6cb87c"/><rect x="678.40" y="284.60" width="0.9" height="76.90" fill="#6cb87c"/><rect x="683.83" y="284.60" width="0.9" height="76.90" fill="#6cb87c"/><rect x="689.26" y="284.60" width="0.9" height="76.90" fill="#6cb87c"/><rect x="694.69" y="284.60" width="0.9" height="76.90" fill="#6cb87c"/><rect x="700.12" y="284.60" width="0.9" height="76.90" fill="#6cb87c"/><rect x="705.54" y="284.60" width="0.9" height="76.90" fill="#6cb87c"/><rect x="710.97" y="284.60" width="0.9" height="76.90" fill="#6cb87c"/><rect x="716.40" y="284.60" width="0.9" height="76.90" fill="#6cb87c"/><rect x="721.83" y="284.60" width="0.9" height="76.90" fill="#6cb87c"/><rect x="727.26" y="284.60" width="0.9" height="76.90" fill="#6cb87c"/><rect x="732.69" y="284.60" width="0.9" height="76.90" fill="#6cb87c"/><rect x="738.11" y="284.60" width="0.9" height="76.90" fill="#6cb87c"/><rect x="743.54" y="284.60" width="0.9" height="76.90" fill="#6cb87c"/><rect x="748.97" y="284.60" width="0.9" height="76.90" fill="#6cb87c"/><rect x="754.40" y="284.60" width="0.9" height="76.90" fill="#6cb87c"/><rect x="759.83" y="284.60" width="0.9" height="76.90" fill="#6cb87c"/><rect x="765.25" y="284.60" width="0.9" height="76.90" fill="#6cb87c"/><rect x="770.68" y="284.60" width="0.9" height="76.90" fill="#6cb87c"/><rect x="776.11" y="284.60" width="0.9" height="76.90" fill="#6cb87c"/><rect x="781.54" y="284.60" width="0.9" height="76.90" fill="#6cb87c"/><rect x="786.97" y="284.60" width="0.9" height="76.90" fill="#6cb87c"/><rect x="792.40" y="284.60" width="0.9" height="76.90" fill="#6cb87c"/><rect x="797.82" y="284.60" width="0.9" height="76.90" fill="#6cb87c"/><rect x="803.25" y="284.60" width="0.9" height="76.90" fill="#6cb87c"/><rect x="808.68" y="284.60" width="0.9" height="76.90" fill="#6cb87c"/><rect x="814.11" y="284.60" width="0.9" height="76.90" fill="#6cb87c"/><rect x="819.54" y="284.60" width="0.9" height="76.90" fill="#6cb87c"/><rect x="824.97" y="284.60" width="0.9" height="76.90" fill="#6cb87c"/><rect x="830.39" y="284.60" width="0.9" height="76.90" fill="#6cb87c"/><rect x="835.82" y="284.60" width="0.9" height="76.90" fill="#6cb87c"/></svg>
<div class="t" style="left:277.80px;width:200px;text-align:center;top:380.06px;font-size:7.25px;color:#80868b;font-weight:normal;">10/10/2025</div>
<div class="t" style="left:337.48px;width:200px;text-align:center;top:380.06px;font-size:7.25px;color:#80868b;font-weight:normal;">21/10/2025</div>
<div class="t" style="left:397.16px;width:200px;text-align:center;top:380.06px;font-size:7.25px;color:#80868b;font-weight:normal;">01/11/2025</div>
<div class="t" style="left:456.84px;width:200px;text-align:center;top:380.06px;font-size:7.25px;color:#80868b;font-weight:normal;">12/11/2025</div>
<div class="t" style="left:516.52px;width:200px;text-align:center;top:380.06px;font-size:7.25px;color:#80868b;font-weight:normal;">23/11/2025</div>
<div class="t" style="left:576.20px;width:200px;text-align:center;top:380.06px;font-size:7.25px;color:#80868b;font-weight:normal;">04/12/2025</div>
<div class="t" style="left:635.88px;width:200px;text-align:center;top:380.06px;font-size:7.25px;color:#80868b;font-weight:normal;">15/12/2025</div>
<div class="t" style="left:695.56px;width:200px;text-align:center;top:380.06px;font-size:7.25px;color:#80868b;font-weight:normal;">26/12/2025</div>
<div class="b" style="left:730.9px;top:364.8px;width:10px;height:10px;border-radius:50%;background:#9e9e9e"></div>
<div class="t" style="left:635.90px;width:200px;text-align:center;top:366.57px;font-size:7px;color:#ffffff;font-weight:bold;">2</div>
<div class="b" style="left:362.6px;top:411.1px;width:488.7px;height:38.2px;border:1px solid #f0f1f3;border-radius:8px;box-sizing:border-box"></div>
<svg class="i" style="left:376.30px;top:422.90px;width:14.2px;height:14.2px" viewBox="0 0 24 24"><path fill="#2f7d46" d="M12 2C6.48 2 2 6.48 2 12s4.48 10 10 10 10-4.48 10-10S17.52 2 12 2zm-2 15l-5-5 1.41-1.41L10 14.17l7.59-7.59L19 8l-9 9z"/></svg>
<div class="t" style="left:400.00px;top:425.54px;font-size:8.58px;color:#3c4043;font-weight:normal;-webkit-text-stroke:0.15px #3c4043">Afficher les données concernant les pages indexées</div>
<svg class="i" style="left:823.60px;top:423.00px;width:14px;height:14px" viewBox="0 0 24 24"><path fill="#5f6368" d="M10 6L8.59 7.41 13.17 12l-4.58 4.59L10 18l6-6z"/></svg>
<svg class="i" style="left:0;top:0;width:1024px;height:460px" viewBox="0 0 1024 460">
<line x1="247.2" y1="163.9" x2="155" y2="200" stroke="#e5422d" stroke-width="3.2" stroke-linecap="butt"/>
<path d="M144.4 205.6 L157.4 191.5 L164 207.2 Z" fill="#e5422d"/>
<line x1="286.4" y1="317.3" x2="345" y2="317.3" stroke="#e5422d" stroke-width="3.2" stroke-linecap="butt"/>
<path d="M343.6 308.7 L360.7 317.3 L343.6 325.8 Z" fill="#e5422d"/>
</svg>
</body></html>
